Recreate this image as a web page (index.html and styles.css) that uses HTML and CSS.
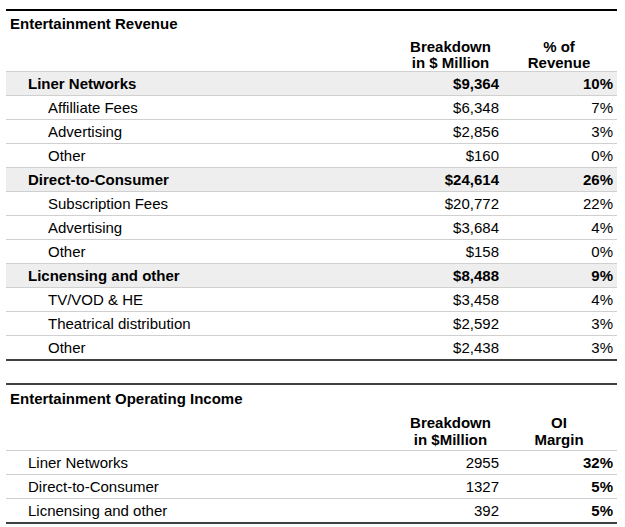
FILE: index.html
```html
<!DOCTYPE html>
<html lang="en">
<head>
<meta charset="utf-8">
<title>Entertainment</title>
<link rel="stylesheet" href="styles.css">
</head>
<body>
<div class="page">
  <table class="fin fin-rev">
    <colgroup><col class="c1"><col class="c2"><col class="c3"></colgroup>
    <thead>
      <tr class="title"><th colspan="3">Entertainment Revenue</th></tr>
      <tr class="head"><th></th><th>Breakdown<br>in $ Million</th><th>% of<br>Revenue</th></tr>
    </thead>
    <tbody>
      <tr class="group"><td class="lbl">Liner Networks</td><td class="num">$9,364</td><td class="pct">10%</td></tr>
      <tr class="sub"><td class="lbl">Affilliate Fees</td><td class="num">$6,348</td><td class="pct">7%</td></tr>
      <tr class="sub"><td class="lbl">Advertising</td><td class="num">$2,856</td><td class="pct">3%</td></tr>
      <tr class="sub"><td class="lbl">Other</td><td class="num">$160</td><td class="pct">0%</td></tr>
      <tr class="group"><td class="lbl">Direct-to-Consumer</td><td class="num">$24,614</td><td class="pct">26%</td></tr>
      <tr class="sub"><td class="lbl">Subscription Fees</td><td class="num">$20,772</td><td class="pct">22%</td></tr>
      <tr class="sub"><td class="lbl">Advertising</td><td class="num">$3,684</td><td class="pct">4%</td></tr>
      <tr class="sub"><td class="lbl">Other</td><td class="num">$158</td><td class="pct">0%</td></tr>
      <tr class="group"><td class="lbl">Licnensing and other</td><td class="num">$8,488</td><td class="pct">9%</td></tr>
      <tr class="sub"><td class="lbl">TV/VOD &amp; HE</td><td class="num">$3,458</td><td class="pct">4%</td></tr>
      <tr class="sub"><td class="lbl">Theatrical distribution</td><td class="num">$2,592</td><td class="pct">3%</td></tr>
      <tr class="sub last"><td class="lbl">Other</td><td class="num">$2,438</td><td class="pct">3%</td></tr>
    </tbody>
  </table>

  <table class="fin fin-oi">
    <colgroup><col class="c1"><col class="c2"><col class="c3"></colgroup>
    <thead>
      <tr class="title"><th colspan="3">Entertainment Operating Income</th></tr>
      <tr class="head"><th></th><th>Breakdown<br>in $Million</th><th>OI<br>Margin</th></tr>
    </thead>
    <tbody>
      <tr class="plain"><td class="lbl">Liner Networks</td><td class="num">2955</td><td class="pct strong">32%</td></tr>
      <tr class="plain"><td class="lbl">Direct-to-Consumer</td><td class="num">1327</td><td class="pct strong">5%</td></tr>
      <tr class="plain last"><td class="lbl">Licnensing and other</td><td class="num">392</td><td class="pct strong">5%</td></tr>
    </tbody>
  </table>
</div>
</body>
</html>
```
FILE: styles.css
```css
html, body {
  margin: 0;
  padding: 0;
  background: #ffffff;
}

body {
  font-family: "Liberation Sans", Arial, sans-serif;
  font-size: 15px;
  color: #000000;
}

.page {
  padding: 9px 0 0 6px;
}

.fin {
  width: 611px;
  border-collapse: collapse;
  table-layout: fixed;
}

.fin .c1 { width: 396px; }
.fin .c2 { width: 103px; }
.fin .c3 { width: 112px; }

th,
td {
  padding: 0;
}

.fin-rev {
  border-top: 2px solid #000000;
}

.fin-oi {
  margin-top: 22px;
  border-top: 2px solid #404040;
}

.title th {
  text-align: left;
  font-size: 15px;
  font-weight: bold;
  line-height: 17px;
  padding: 4px 0 0 4px;
}

.fin-oi .title th {
  padding-top: 5px;
}

.head th {
  font-weight: bold;
  text-align: center;
  vertical-align: bottom;
  line-height: 16px;
  padding-top: 7px;
  border-bottom: 1px solid #d0d0d0;
}

.head th:nth-child(2) { padding-right: 6px; }
.head th:nth-child(3) { padding-right: 4px; }

.fin-oi .head th {
  line-height: 17px;
  padding-bottom: 2px;
}

tbody td {
  line-height: 22px;
  padding-top: 1px;
  border-bottom: 1px solid #d0d0d0;
  white-space: nowrap;
}

tbody tr.last td {
  border-bottom: 2px solid #404040;
}

.group td {
  background: #eeeeee;
  font-weight: bold;
}

.group .lbl,
.plain .lbl {
  padding-left: 22px;
}

.sub .lbl {
  padding-left: 42px;
}

.num {
  text-align: right;
  padding-right: 6px;
}

.pct {
  text-align: right;
  padding-right: 4px;
}

.strong {
  font-weight: bold;
}
```
